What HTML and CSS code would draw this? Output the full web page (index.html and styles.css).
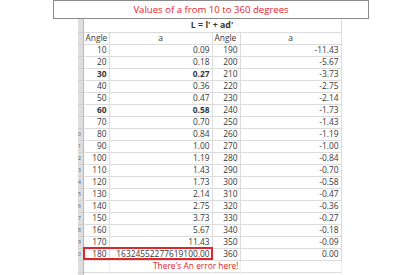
FILE: index.html
```html
<!DOCTYPE html>
<html lang="en">
<head>
    <meta charset="UTF-8">
    <title>Values of a</title>
    <link rel="stylesheet" href="styles.css">
</head>
<body>
    <div class="title-box">Values of a from 10 to 360 degrees</div>

    <div class="sheet">
        <table class="grid">
            <colgroup>
                <col class="c-rh">
                <col class="c-angle">
                <col class="c-a">
                <col class="c-angle2">
                <col class="c-a2">
            </colgroup>
            <tbody id="rows">
                <tr class="formula-row">
                    <td class="rh"></td>
                    <td colspan="4" class="formula">L = l' + ad'</td>
                </tr>
                <tr>
                    <td class="rh"></td>
                    <td class="txt">Angle</td>
                    <td class="center">a</td>
                    <td class="txt">Angle</td>
                    <td class="center">a</td>
                </tr>
            </tbody>
        </table>
        <div class="error-box"></div>
    </div>

    <script>
        const left = ['0.09','0.18','0.27','0.36','0.47','0.58','0.70','0.84','1.00','1.19','1.43','1.73','2.14','2.75','3.73','5.67','11.43','16324552277619100.00'];
        const right = ['-11.43','-5.67','-3.73','-2.75','-2.14','-1.73','-1.43','-1.19','-1.00','-0.84','-0.70','-0.58','-0.47','-0.36','-0.27','-0.18','-0.09','0.00'];
        const tbody = document.getElementById('rows');

        // only the tail of two-digit row numbers peeks out of the header strip
        function rowHead(n) {
            return n >= 10 ? `<div class="rh-num">${n % 10}</div>` : '';
        }

        left.forEach((val, i) => {
            const angle = (i + 1) * 10;
            const bold = angle === 30 || angle === 60 ? ' bold' : '';
            const tr = document.createElement('tr');
            tr.innerHTML = `
                <td class="rh">${rowHead(i + 3)}</td>
                <td class="num${bold}">${angle}</td>
                <td class="num${bold}">${val}</td>
                <td class="num">${angle + 180}</td>
                <td class="num">${right[i]}</td>
            `;
            tbody.appendChild(tr);
        });

        // note row under the table
        const note = document.createElement('tr');
        note.className = 'note-row';
        note.innerHTML = `
            <td class="rh"></td>
            <td></td>
            <td colspan="2" class="note">There's An error here!</td>
            <td></td>
        `;
        tbody.appendChild(note);

        const blank = document.createElement('tr');
        blank.className = 'note-row';
        blank.innerHTML = '<td class="rh"></td><td></td><td></td><td></td><td></td>';
        tbody.appendChild(blank);
    </script>
</body>
</html>
```

FILE: styles.css
```css
:root {
    --grid-line: #dcdcdc;
    --text-color: #383838;
    --red: #e0262b;
}

* {
    margin: 0;
    padding: 0;
    box-sizing: border-box;
}

body {
    background: white;
    color: var(--text-color);
    font-family: "Open Sans", "Liberation Sans", sans-serif;
    width: 400px;
    height: 275px;
    overflow: hidden;
}

.title-box {
    margin-left: 53px;
    width: 316px;
    height: 19px;
    border: 1px solid #8a8a8a;
    color: var(--red);
    font-size: 9.6px;
    line-height: 17px;
    text-align: center;
}

.sheet {
    position: relative;
    margin-left: 78px;
    width: 263px;
}

.grid {
    table-layout: fixed;
    border-collapse: collapse;
    width: 263px;
    font-size: 8.4px;
}

.c-rh { width: 5px; }
.c-angle { width: 26px; }
.c-a { width: 103px; }
.c-angle2 { width: 28px; }
.c-a2 { width: 101px; }

.grid td {
    height: 12px;
    border: 1px solid var(--grid-line);
    line-height: 10px;
    white-space: nowrap;
    padding: 0 2px;
    overflow: hidden;
}

.grid tr:first-child td {
    border-top: none;
}

.formula-row td {
    height: 13px;
}

.grid td.rh {
    background: #dedede;
    border-left: none;
    border-right: 1px solid #b8b8b8;
    border-top-color: #d0d0d0;
    border-bottom-color: #d0d0d0;
    padding: 0;
}

.rh-num {
    width: 2px;
    font-size: 5px;
    line-height: 10px;
    color: #4a5a78;
}

.formula {
    font-weight: bold;
    text-align: center;
    font-size: 8.8px;
}

.txt {
    text-align: left;
}

.center {
    text-align: center;
}

.num {
    text-align: right;
}

.bold {
    font-weight: bold;
}

.note-row td {
    border-bottom: none;
    border-left-color: #f0f0f0;
    border-right-color: #f0f0f0;
}

.grid .note-row td.rh {
    border-right: 1px solid #b8b8b8;
}

.grid td.note {
    color: var(--red);
    text-align: right;
    overflow: visible;
    padding-right: 1px;
}

.error-box {
    position: absolute;
    left: 5px;
    top: 228px;
    width: 130px;
    height: 13px;
    border: 2px solid var(--red);
}
```
